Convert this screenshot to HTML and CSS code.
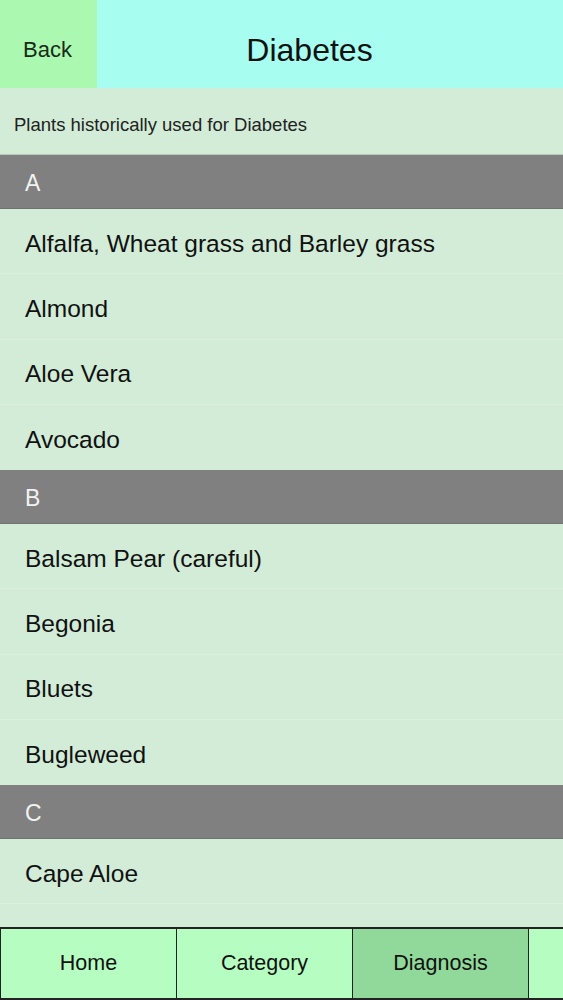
FILE: index.html
```html
<!DOCTYPE html>
<html>
<head>
<meta charset="utf-8">
<link rel="stylesheet" href="styles.css">
</head>
<body>
<div class="app">
  <header class="nav">
    <div class="back">Back</div>
    <div class="title">Diabetes</div>
  </header>
  <div class="subtitle">Plants historically used for Diabetes</div>
  <div class="list">
    <div class="section">A</div>
    <div class="row">Alfalfa, Wheat grass and Barley grass</div>
    <div class="row">Almond</div>
    <div class="row">Aloe Vera</div>
    <div class="row last">Avocado</div>
    <div class="section">B</div>
    <div class="row">Balsam Pear (careful)</div>
    <div class="row">Begonia</div>
    <div class="row">Bluets</div>
    <div class="row last">Bugleweed</div>
    <div class="section">C</div>
    <div class="row">Cape Aloe</div>
    <div class="row"></div>
  </div>
  <nav class="tabs">
    <div class="tab">Home</div>
    <div class="tab">Category</div>
    <div class="tab active">Diagnosis</div>
    <div class="tab"></div>
  </nav>
</div>
</body>
</html>
```
FILE: styles.css
```css
html, body {
  margin: 0;
  padding: 0;
}
body {
  font-family: "Liberation Sans", Arial, sans-serif;
  color: #111;
  background: #d2ecd7;
}
.app {
  width: 563px;
  height: 1000px;
  display: flex;
  flex-direction: column;
  overflow: hidden;
}
.nav {
  height: 88px;
  display: flex;
  background: #a6fdf0;
  flex: none;
}
.back {
  width: 97px;
  background: #abf9b0;
  display: flex;
  align-items: center;
  padding-left: 23px;
  padding-top: 12px;
  box-sizing: border-box;
  font-size: 22px;
  color: #1a2a1a;
}
.title {
  flex: 1;
  display: flex;
  align-items: center;
  justify-content: center;
  font-size: 32px;
  padding-right: 41px;
  padding-top: 12px;
  color: #111;
}
.subtitle {
  height: 67px;
  flex: none;
  display: flex;
  align-items: center;
  padding-left: 14px;
  padding-top: 7px;
  font-size: 18.5px;
  color: #222;
  border-bottom: 1px solid #b8c9bc;
  box-sizing: border-box;
}
.list {
  flex: 1;
  overflow: hidden;
  min-height: 0;
}
.section {
  height: 54px;
  background: #808080;
  color: #f2f2f2;
  font-size: 23px;
  display: flex;
  align-items: center;
  padding-left: 25px;
  padding-top: 4px;
  box-sizing: border-box;
  border-bottom: 1px solid #6e746f;
}
.row {
  height: 65.25px;
  box-sizing: border-box;
  display: flex;
  align-items: center;
  padding-left: 25px;
  padding-top: 5px;
  font-size: 24.5px;
  color: #111;
  border-bottom: 1px solid #dcefe0;
}
.row.last {
  border-bottom: none;
}
.tabs {
  height: 73px;
  flex: none;
  display: flex;
  border-top: 2px solid #222;
  border-bottom: 2px solid #222;
  box-sizing: border-box;
  background: #b5fdc1;
}
.tab {
  width: 176px;
  flex: none;
  box-sizing: border-box;
  border-left: 1.5px solid #222;
  display: flex;
  align-items: center;
  justify-content: center;
  font-size: 21.5px;
  color: #111;
}
.tab.active {
  background: #90d99a;
}
```
